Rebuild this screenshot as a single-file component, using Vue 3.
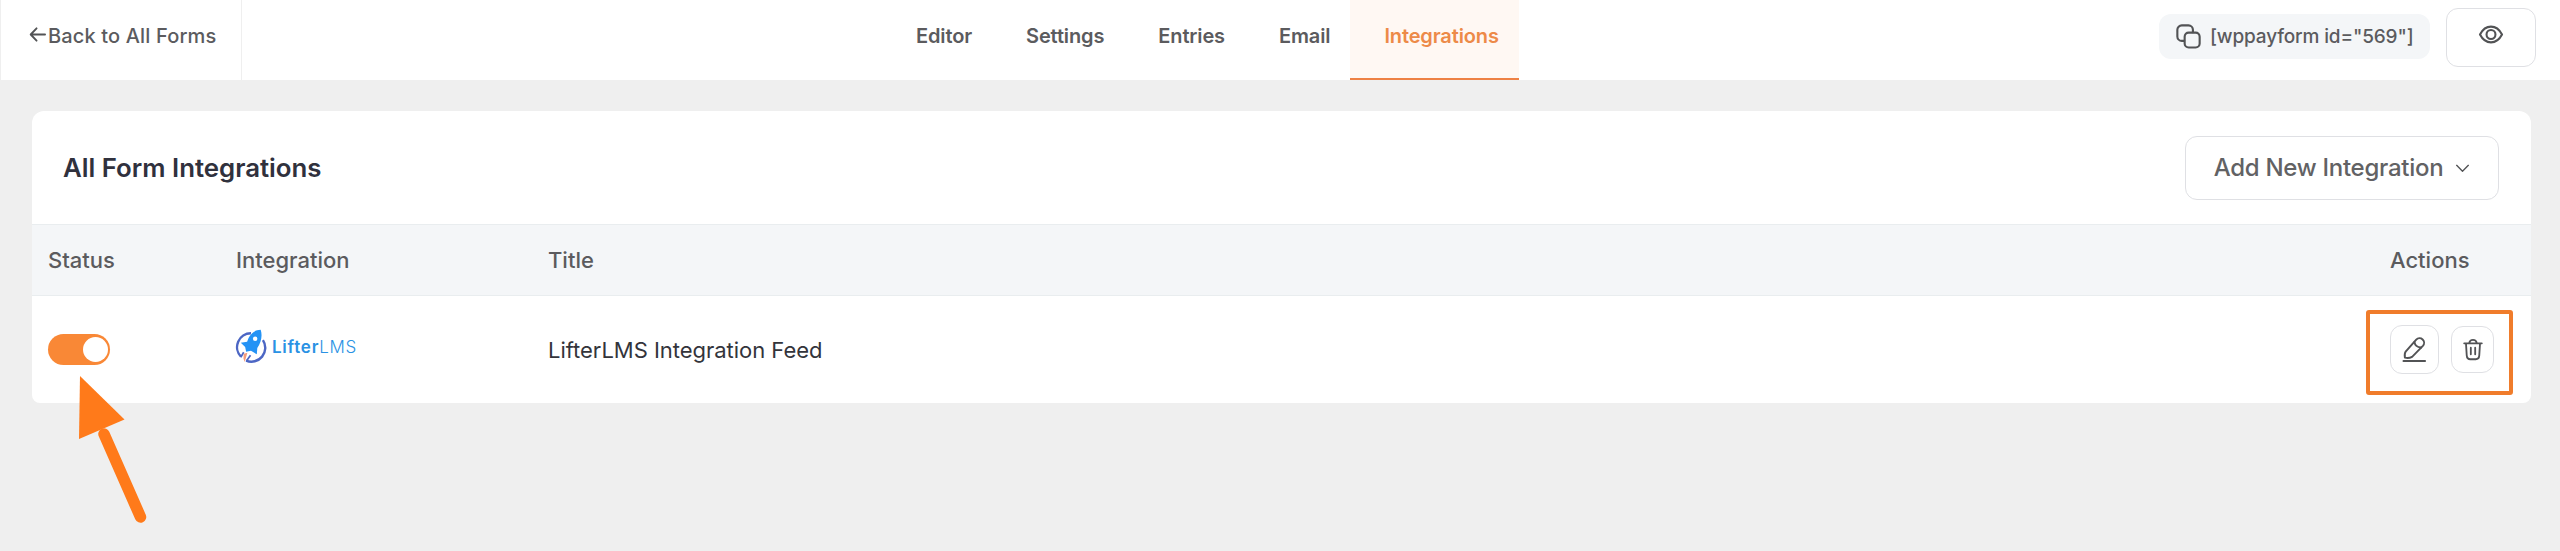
<script setup>
const tabs = [
  { name: 'Editor' },
  { name: 'Settings' },
  { name: 'Entries' },
  { name: 'Email' },
  { name: 'Integrations', active: true },
]
</script>

<template>
  <div class="page">
    <header class="topbar">
      <a class="back">
        <svg class="back-icon" viewBox="0 0 18 18"><path d="M8 2.500 1.800 9 8 15.500M2 9H17" /></svg>
        <span>Back to All Forms</span>
      </a>
      <nav class="tabs">
        <a v-for="tab in tabs" :key="tab.name" class="tab" :class="{ active: tab.active }">{{ tab.name }}</a>
      </nav>
      <div class="tools">
        <div class="shortcode">
          <svg class="copy-icon" viewBox="0 0 26 26">
            <path d="M8.500 17.500H6a4.600 4.600 0 0 1-4.600-4.600V6A4.600 4.600 0 0 1 6 1.400h7A4.600 4.600 0 0 1 17.600 6v2.500" />
            <rect x="9" y="9" width="15.600" height="15.400" rx="4.200" />
          </svg>
          <span>[wppayform id="569"]</span>
        </div>
        <button class="preview">
          <svg viewBox="0 0 26 20">
            <path d="M1.400 10C4 5 8 1.700 13 1.700S22 5 24.600 10C22 15 18 18.300 13 18.300S4 15 1.400 10Z" />
            <circle cx="13" cy="10" r="4.700" />
          </svg>
        </button>
      </div>
    </header>

    <main class="card">
      <div class="card-head">
        <h1>All Form Integrations</h1>
        <button class="add">
          <span>Add New Integration</span>
          <svg viewBox="0 0 16 10"><path d="M1.500 1.500 8 8l6.500-6.500" /></svg>
        </button>
      </div>
      <div class="row head">
        <div class="cell">Status</div>
        <div class="cell">Integration</div>
        <div class="cell">Title</div>
        <div class="cell">Actions</div>
      </div>
      <div class="row body">
        <div class="cell toggle-cell">
          <div class="toggle"><i /></div>
          <svg class="pointer" viewBox="0 0 70 150">
            <path class="shaft" d="M26 58 62.500 141" />
            <path class="tip" d="M2 0 46.500 43.500 1 63Z" />
          </svg>
        </div>
        <div class="cell">
          <div class="logo">
            <svg viewBox="0 0 34 36">
              <path class="ring" d="M17.500 4.400A14.200 14.200 0 0 0 7.200 28.500M29.800 11.500A14.200 14.200 0 0 1 12.500 32.500" />
              <path class="ring fin" d="M7 29 10 24M12.800 33 17 27" />
              <path class="rocket" d="M27.500.8C22 .8 17.500 4.200 15 9.300L13.500 13 7 14.200 11.500 18.500 12.500 23.500 17.500 22.500 23.500 26 24 19.500C28 14 29.500 7 27.500.8Z" />
              <circle class="window" cx="21.800" cy="10" r="2.300" />
              <path class="flame" d="M10 25.500 13.800 24.500 11 34 9.800 30.500Z" />
            </svg>
            <span class="wordmark"><b>Lifter</b><span>LMS</span></span>
          </div>
        </div>
        <div class="cell feed">LifterLMS Integration Feed</div>
        <div class="cell actions">
          <button class="edit">
            <svg viewBox="0 0 26 28">
              <path d="M3 22.500C2.500 19 2.600 17.800 3.800 16.300L14.800 3.800a4.700 4.700 0 0 1 6.900 6.400L10.500 21.600C8.500 22.700 6 23.200 3 22.500Z" />
              <path d="M13 6.200C13.400 9.500 16 11.700 19.800 12" />
              <path class="line" d="M1.500 26H24" />
            </svg>
          </button>
          <button class="trash">
            <svg viewBox="0 0 22 24">
              <path d="M1.300 5.200H20.700M6.800 5C7.300 2.600 8.500 1.500 11 1.500S14.700 2.600 15.200 5M3.300 5.500 4.100 18.500C4.300 21.500 5.600 22.700 8 22.700H14C16.400 22.700 17.700 21.500 17.900 18.500L18.700 5.500M8.600 10V17.300M13.400 10V17.300" />
            </svg>
          </button>
          <div class="highlight" />
        </div>
      </div>
    </main>
  </div>
</template>

<style>
body {
  background: #efefef;
}
</style>

<style scoped>
* {
  box-sizing: border-box;
}
.page {
  width: 2560px;
  height: 551px;
  overflow: hidden;
  background: #efefef;
  font-family: Inter, "Liberation Sans", sans-serif;
  color: #5b5b5e;
}
svg {
  display: block;
  flex: none;
  fill: none;
  stroke: #525355;
  stroke-width: 2.200;
  stroke-linecap: round;
  stroke-linejoin: round;
  overflow: visible;
}
button {
  display: flex;
  align-items: center;
  justify-content: center;
  padding: 0;
  background: #fff;
  border: 1px solid #dfe0e4;
  border-radius: 12px;
  font: inherit;
  color: inherit;
}
.topbar {
  display: grid;
  grid-template-columns: 242px 1fr 401px;
  height: 80px;
  background: #fff;
}
.back {
  display: flex;
  align-items: center;
  gap: 2px;
  padding: 0 0 9px 28px;
  border: 1px solid #efefef;
  border-width: 0 1px 0 1px;
  font-size: 20px;
  font-weight: 500;
  letter-spacing: 0.15px;
  white-space: nowrap;
}
.back-icon {
  width: 17px;
  height: 17px;
  stroke-width: 2;
  margin-top: -2px;
}
.tabs {
  display: flex;
  padding-left: 640px;
  font-size: 20px;
  font-weight: 600;
  letter-spacing: -0.13px;
}
.tab {
  padding: 0 20px 9px 34px;
  display: flex;
  align-items: center;
}
.tab.active {
  padding-bottom: 7px;
  color: #ed8a48;
  background: #fff8f3;
  border-bottom: 2px solid #ee8144;
}
.tools {
  display: flex;
  gap: 16px;
}
.shortcode {
  display: flex;
  align-items: center;
  gap: 9px;
  width: 271px;
  height: 45px;
  margin-top: 14px;
  padding-left: 17px;
  background: #f4f6f8;
  border-radius: 12px;
  font-size: 19px;
  font-weight: 500;
  letter-spacing: -0.15px;
  white-space: nowrap;
}
.copy-icon {
  width: 25px;
  height: 25px;
}
.preview {
  width: 90px;
  height: 59px;
  margin-top: 8px;
  padding-bottom: 6px;
}
.preview svg {
  width: 26px;
  height: 19px;
}
.card {
  margin: 31px 29px 0 32px;
  height: 292px;
  background: #fff;
  border-radius: 12px 12px 8px 8px;
}
.card-head {
  display: flex;
  justify-content: space-between;
  height: 113px;
  padding: 25px 32px 0 31px;
}
h1 {
  margin: 0;
  font-size: 25.800px;
  line-height: 63px;
  font-weight: 600;
  color: #30313d;
}
.add {
  width: 314px;
  height: 64px;
  gap: 12px;
  padding-bottom: 1px;
  font-size: 24px;
  font-weight: 500;
  letter-spacing: -0.27px;
  color: #626264;
}
.add svg {
  width: 15px;
  height: 9px;
  margin-top: 2px;
  stroke-width: 1.500;
}
.row {
  display: grid;
  grid-template-columns: 188px 312px 1842px 1fr;
  padding-left: 16px;
}
.cell {
  display: flex;
  align-items: center;
  min-width: 0;
}
.head {
  height: 72px;
  background: #f4f6f8;
  border: 1px solid #e9edef;
  border-width: 1px 0;
  font-size: 22px;
  font-weight: 500;
}
.body {
  height: 107px;
  font-size: 22px;
}
.feed {
  color: #33343b;
  letter-spacing: -0.03px;
}
.toggle-cell {
  position: relative;
}
.toggle {
  width: 62px;
  height: 31px;
  border-radius: 16px;
  background: #f98836;
  display: flex;
  justify-content: flex-end;
  align-items: center;
  padding-right: 2px;
}
.toggle i {
  width: 25px;
  height: 25px;
  border-radius: 50%;
  background: #fff;
}
.pointer {
  position: absolute;
  left: 30px;
  top: 80px;
  width: 70px;
  height: 150px;
}
.shaft {
  stroke: #ff7a1a;
  stroke-width: 11.500;
}
.tip {
  stroke: none;
  fill: #ff7a1a;
}
.logo {
  display: flex;
  align-items: center;
  gap: 5px;
  margin: -6px 0 0 -2px;
}
.logo > svg {
  width: 33px;
  height: 35px;
}
.ring {
  stroke: #4c66c4;
  stroke-width: 2.500;
  stroke-linecap: butt;
}
.ring.fin {
  stroke-width: 1.800;
}
.rocket {
  fill: #2493f5;
  stroke: none;
}
.window {
  fill: #fff;
  stroke: none;
}
.flame {
  fill: #f59b7b;
  stroke: none;
}
.wordmark {
  font-size: 17px;
  letter-spacing: 0.75px;
  color: #2a92e4;
  white-space: nowrap;
}
.wordmark b {
  font-weight: 600;
}
.wordmark span {
  font-weight: 300;
}
.actions {
  position: relative;
  gap: 12px;
}
.edit {
  width: 49px;
  height: 49px;
}
.edit svg {
  width: 25px;
  height: 27px;
  stroke-width: 2;
}
.trash {
  width: 43px;
  height: 47px;
}
.trash svg {
  width: 20px;
  height: 23px;
  stroke-width: 2;
}
.highlight {
  position: absolute;
  left: -24px;
  top: 14px;
  width: 147px;
  height: 85px;
  border: 4px solid #f07c2b;
  border-radius: 3px;
}
</style>
